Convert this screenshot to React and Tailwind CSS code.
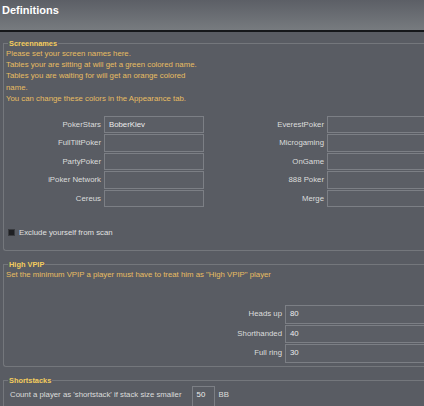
const left = [
  ["PokerStars", "BoberKiev"],
  ["FullTiltPoker", ""],
  ["PartyPoker", ""],
  ["iPoker Network", ""],
  ["Cereus", ""],
];

const right = ["EverestPoker", "Microgaming", "OnGame", "888 Poker", "Merge"];

const vpip = [
  ["Heads up", "80"],
  ["Shorthanded", "40"],
  ["Full ring", "30"],
];

function Field({ value, className = "" }) {
  return (
    <div
      className={`h-[17.4px] border border-[#7c7f85] bg-[#5b5e65] pl-[4px] text-[#ececec] leading-[15px] ${className}`}
    >
      {value}
    </div>
  );
}

function Legend({ children }) {
  return (
    <legend className="ml-[4px] px-[1px] font-bold text-[7.4px] leading-[11px] text-[#f4cc5e]">
      {children}
    </legend>
  );
}

export default function App() {
  return (
    <div
      className="w-[424px] h-[406px] overflow-hidden bg-[#595c63] text-[7.8px] leading-[11.2px]"
      style={{ fontFamily: '"Liberation Sans", Arial, sans-serif' }}
    >
      <div className="h-[32px] border-b-2 border-[#15171a] bg-gradient-to-b from-[#5c5f66] to-[#777b7f] pl-[2px] pt-[3px]">
        <span className="text-[11px] font-bold leading-[14px] text-white">Definitions</span>
      </div>

      <div className="pl-[3px] pt-[6px]">
        {/* screen names */}
        <fieldset className="-mr-[20px] h-[213px] rounded-bl-[3px] border-t border-l border-b border-[#74777c]">
          <Legend>Screennames</Legend>
          <div className="pl-[2px] -mt-[1px] text-[#e8bd62]">
            <p>Please set your screen names here.</p>
            <p>Tables your are sitting at will get a green colored name.</p>
            <p>Tables you are waiting for will get an orange colored</p>
            <p>name.</p>
            <p>You can change these colors in the Appearance tab.</p>
          </div>

          <div className="mt-[12px] grid grid-cols-[97px_100px_117px_130px] gap-y-[1px] gap-x-[3px] text-[#dcdcdc]">
            {left.map(([site, name], i) => (
              <div key={site} className="contents">
                <div className="text-right leading-[17.4px]">{site}</div>
                <Field value={name} />
                <div className="text-right leading-[17.4px]">{right[i]}</div>
                <Field />
              </div>
            ))}
          </div>

          <label className="mt-[20px] ml-[4px] flex items-center gap-[4px] text-[#e0e0e0]">
            <span className="h-[7px] w-[7px] bg-[#1f2023] border border-[#3a3c40]" />
            Exclude yourself from scan
          </label>
        </fieldset>

        {/* high vpip */}
        <fieldset className="-mr-[20px] mt-[8px] rounded-bl-[3px] border-t border-l border-b border-[#74777c] pb-[3px]">
          <Legend>High VPIP</Legend>
          <p className="pl-[2px] -mt-[1px] text-[#e8bd62]">
            Set the minimum VPIP a player must have to treat him as "High VPIP" player
          </p>

          <div className="mt-[25px] grid grid-cols-[278px_160px] gap-y-[1px] gap-x-[3px] text-[#dcdcdc]">
            {vpip.map(([k, v]) => (
              <div key={k} className="contents">
                <div className="text-right leading-[18px]">{k}</div>
                <Field value={v} className="h-[18.5px] border-r-0" />
              </div>
            ))}
          </div>
        </fieldset>

        {/* shortstacks */}
        <fieldset className="-mr-[20px] mt-[8px] h-[40px] border-t border-l border-[#74777c]">
          <Legend>Shortstacks</Legend>
          <div className="flex items-start text-[#dcdcdc]">
            <span className="pl-[6px] pt-[3px]">Count a player as 'shortstack' if stack size smaller</span>
            <div className="ml-[10px] h-[24px] w-[23px] border-l border-r border-t border-[#7c7f85] pl-[4px] pt-[2px] text-[#ececec]">
              50
            </div>
            <span className="pl-[4px] pt-[3px]">BB</span>
          </div>
        </fieldset>
      </div>
    </div>
  );
}
